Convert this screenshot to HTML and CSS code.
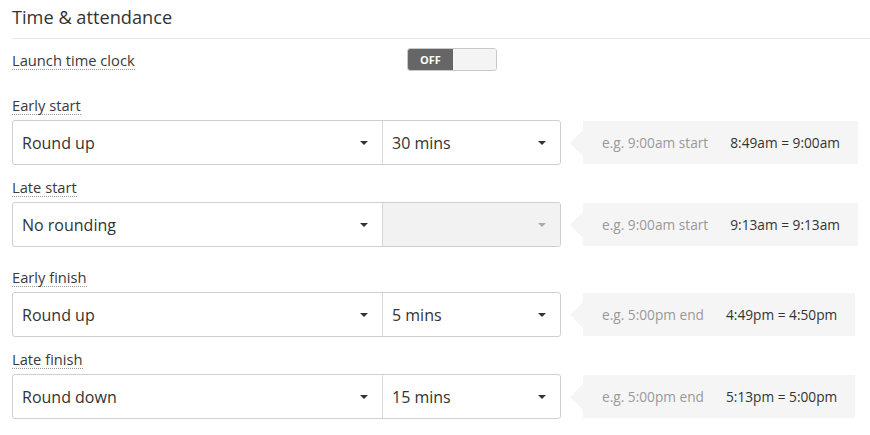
FILE: index.html
```html
<!DOCTYPE html>
<html>
<head>
<meta charset="utf-8">
<link rel="stylesheet" href="styles.css">
</head>
<body>
<div class="panel">
  <h2 class="title">Time &amp; attendance</h2>
  <div class="launch">
    <div class="launch-label"><span class="label">Launch time clock</span></div>
    <div class="toggle"><span class="toggle-off">OFF</span><span class="toggle-rest"></span></div>
  </div>

  <div class="group first">
    <div class="label-row"><span class="label">Early start</span></div>
    <div class="row">
      <div class="selects">
        <div class="sel sel-main"><span>Round up</span><i class="caret"></i></div>
        <div class="sel sel-mins"><span>30 mins</span><i class="caret"></i></div>
      </div>
      <div class="hint"><span class="eg">e.g. 9:00am start</span><span class="res">8:49am = 9:00am</span></div>
    </div>
  </div>

  <div class="group">
    <div class="label-row"><span class="label">Late start</span></div>
    <div class="row">
      <div class="selects">
        <div class="sel sel-main"><span>No rounding</span><i class="caret"></i></div>
        <div class="sel sel-mins disabled"><span></span><i class="caret"></i></div>
      </div>
      <div class="hint"><span class="eg">e.g. 9:00am start</span><span class="res">9:13am = 9:13am</span></div>
    </div>
  </div>

  <div class="group section">
    <div class="label-row"><span class="label">Early finish</span></div>
    <div class="row">
      <div class="selects">
        <div class="sel sel-main"><span>Round up</span><i class="caret"></i></div>
        <div class="sel sel-mins"><span>5 mins</span><i class="caret"></i></div>
      </div>
      <div class="hint"><span class="eg">e.g. 5:00pm end</span><span class="res">4:49pm = 4:50pm</span></div>
    </div>
  </div>

  <div class="group">
    <div class="label-row"><span class="label">Late finish</span></div>
    <div class="row">
      <div class="selects">
        <div class="sel sel-main"><span>Round down</span><i class="caret"></i></div>
        <div class="sel sel-mins"><span>15 mins</span><i class="caret"></i></div>
      </div>
      <div class="hint"><span class="eg">e.g. 5:00pm end</span><span class="res">5:13pm = 5:00pm</span></div>
    </div>
  </div>
</div>
</body>
</html>
```

FILE: styles.css
```css
* { box-sizing: border-box; }
html, body { margin: 0; padding: 0; background: #fff; }
body {
  font-family: "Open Sans", "Liberation Sans", sans-serif;
  color: #333;
}
.panel { padding: 0 0 0 12px; }
.title {
  margin: 0;
  padding-top: 5px;
  padding-bottom: 9px;
  font-size: 18.2px;
  line-height: 24px;
  font-weight: 400;
  color: #333;
  border-bottom: 1px solid #e8e8e8;
}
.launch {
  margin-top: 9px;
  height: 23px;
  display: flex;
  align-items: center;
}
.launch-label {
  width: 395px;
  flex: none;
  display: flex;
  margin-top: 1px;
}
.label {
  display: block;
  font-size: 14.7px;
  line-height: 18px;
  color: #3a3a3a;
  border-bottom: 1px dotted #999;
}
.toggle {
  display: flex;
  width: 90px;
  height: 23px;
  border: 1px solid #c8c8c8;
  border-radius: 3px;
  overflow: hidden;
}
.toggle-off {
  width: 45px;
  background: #666;
  color: #fff;
  font-size: 11px;
  font-weight: 700;
  display: flex;
  align-items: center;
  justify-content: center;
}
.toggle-rest { flex: 1; background: #f4f4f4; }

.group { margin-top: 13px; }
.group.first { margin-top: 25px; }
.group.section { margin-top: 21px; }
.label-row { display: flex; align-items: flex-start; height: 19px; margin-bottom: 5px; }
.row { display: flex; align-items: flex-start; }
.selects {
  display: flex;
  height: 45px;
  border: 1px solid #cfcfcf;
  border-radius: 3px;
  background: #fff;
}
.sel {
  display: flex;
  align-items: center;
  justify-content: space-between;
  font-size: 16px;
  color: #333;
  padding-left: 9px;
  padding-right: 14px;
}
.sel-main { width: 370px; border-right: 1px solid #d8d8d8; }
.sel-mins { width: 177px; }
.sel.disabled { background: #f2f2f2; border-radius: 0 2px 2px 0; }
.caret {
  width: 0; height: 0;
  border-left: 4px solid transparent;
  border-right: 4px solid transparent;
  border-top: 4px solid #333;
  margin-top: 1px;
}
.disabled .caret { border-top-color: #aaa; }
.hint {
  position: relative;
  margin-left: 22px;
  margin-top: 1px;
  height: 43px;
  background: #f5f5f5;
  display: flex;
  align-items: center;
  gap: 22px;
  padding: 0 18px 0 19px;
  font-size: 13.7px;
}
.hint::before {
  content: "";
  position: absolute;
  left: -13px;
  top: 50%;
  margin-top: -13px;
  border-top: 13px solid transparent;
  border-bottom: 13px solid transparent;
  border-right: 13px solid #f5f5f5;
}
.eg { color: #999; }
.res { color: #333; }
```
